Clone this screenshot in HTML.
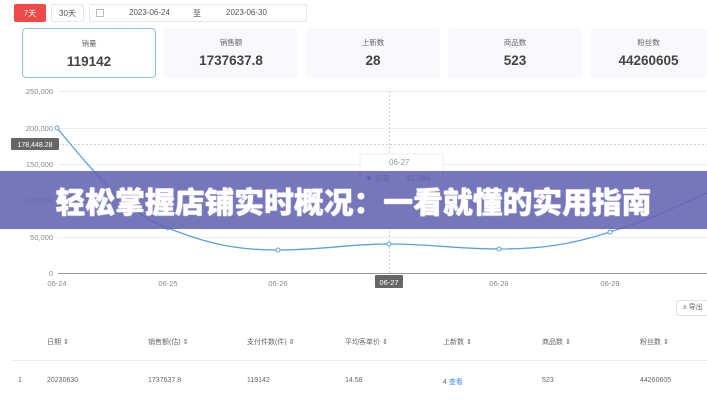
<!DOCTYPE html>
<html><head><meta charset="utf-8"><style>
*{margin:0;padding:0;box-sizing:border-box}
body{width:707px;height:400px;overflow:hidden;background:#fff;font-family:"Liberation Sans","Noto Sans CJK SC",sans-serif;position:relative;color:#333}
.abs{position:absolute}
.btn{position:absolute;top:4px;height:18px;font-size:8px;line-height:18px;text-align:center;border:1px solid #e6e6e6;border-radius:2px;color:#555}
.card{position:absolute;top:28px;width:134px;height:50px;background:#f7f9fc;border-radius:4px;text-align:center}
.card .t{font-size:7.5px;color:#666;margin-top:9px}
.card .v{font-size:13.5px;font-weight:bold;color:#444;margin-top:5px}
.yl{position:absolute;right:654px;font-size:7.5px;color:#888;text-align:right}
.xl{position:absolute;top:279px;font-size:7.5px;color:#888;transform:translateX(-50%)}
.th{position:absolute;top:337px;font-size:7px;color:#666}
.td{position:absolute;top:377px;font-size:7px;color:#666}
</style></head><body>
<div class="btn" style="left:14px;width:32px;background:#f04a4a;border-color:#f04a4a;color:#fff">7天</div>
<div class="btn" style="left:51px;width:33px">30天</div>
<div class="btn" style="left:89px;width:218px"></div>
<div class="abs" style="left:96px;top:9px;width:8px;height:8px;border:1px solid #bbb"></div>
<div class="abs" style="left:129px;top:8px;font-size:8px;color:#555">2023-06-24</div>
<div class="abs" style="left:193px;top:8px;font-size:8px;color:#555">至</div>
<div class="abs" style="left:226px;top:8px;font-size:8px;color:#555">2023-06-30</div>

<div class="card" style="left:22px;background:#fff;border:1.5px solid #8cc4e6"><div class="t">销量</div><div class="v">119142</div></div>
<div class="card" style="left:164px"><div class="t">销售额</div><div class="v">1737637.8</div></div>
<div class="card" style="left:306px"><div class="t">上新数</div><div class="v">28</div></div>
<div class="card" style="left:448px"><div class="t">商品数</div><div class="v">523</div></div>
<div class="card" style="left:590px;width:117px"><div class="t">粉丝数</div><div class="v">44260605</div></div>

<div class="yl" style="top:87px">250,000</div>
<div class="yl" style="top:124px">200,000</div>
<div class="yl" style="top:160px">150,000</div>
<div class="yl" style="top:196px">100,000</div>
<div class="yl" style="top:233px">50,000</div>
<div class="yl" style="top:269px">0</div>
<svg class="abs" style="left:0;top:0" width="707" height="300">
<g stroke="#eee" stroke-width="1">
<line x1="58" y1="91.5" x2="707" y2="91.5"/><line x1="58" y1="128.5" x2="707" y2="128.5"/><line x1="58" y1="164.5" x2="707" y2="164.5"/><line x1="58" y1="200.5" x2="707" y2="200.5"/><line x1="58" y1="237.5" x2="707" y2="237.5"/></g>
<line x1="58" y1="273.5" x2="707" y2="273.5" stroke="#999"/>
<line x1="58" y1="144.5" x2="707" y2="144.5" stroke="#ccc" stroke-dasharray="2,2"/>
<line x1="389.5" y1="91" x2="389.5" y2="273" stroke="#ccc" stroke-dasharray="2,2"/>
<path d="M57 128 C100 180,130 215,168 228 C210 245,240 250,278 250 C320 250,350 244,389 244 C430 244,460 249,499 249 C540 249,570 245,610 232 C650 220,680 205,707 193" fill="none" stroke="#5aa3d8" stroke-width="1.3"/>
<g fill="#fff" stroke="#5aa3d8" stroke-width="1"><circle cx="57" cy="128" r="2"/><circle cx="168" cy="228" r="2"/><circle cx="278" cy="250" r="2"/><circle cx="389" cy="244" r="2"/><circle cx="499" cy="249" r="2"/><circle cx="610" cy="232" r="2"/></g>
<rect x="360" y="154" width="83" height="32" fill="#fff" stroke="#eee" rx="2"/>
<text x="389" y="165" font-size="8" fill="#999" font-family="Liberation Sans">06-27</text>
<circle cx="369" cy="178" r="2" fill="#3a6fc4"/>
<text x="375" y="181" font-size="7.5" fill="#777" font-family="Liberation Sans,Noto Sans CJK SC">销量</text>
<text x="406" y="181" font-size="8" fill="#555" font-family="Liberation Sans">41,084</text>
<rect x="11" y="138" width="48" height="12" fill="#666" rx="1"/>
<text x="35" y="147" font-size="7" fill="#fff" text-anchor="middle" font-family="Liberation Sans">178,448.28</text>
<rect x="375" y="275" width="28" height="13" fill="#666" rx="1"/>
<text x="389" y="285" font-size="7.5" fill="#fff" text-anchor="middle" font-family="Liberation Sans">06-27</text>
</svg>
<div class="xl" style="left:57px">06-24</div>
<div class="xl" style="left:168px">06-25</div>
<div class="xl" style="left:278px">06-26</div>
<div class="xl" style="left:499px">06-28</div>
<div class="xl" style="left:610px">06-29</div>

<div class="abs" style="left:676px;top:300px;width:40px;height:16px;border:1px solid #e3e3e3;border-radius:2px;font-size:7px;color:#666;line-height:14px;padding-left:6px">± 导出</div>
<div class="th" style="left:47px">日期 ⇕</div>
<div class="th" style="left:148px">销售额(估) ⇕</div>
<div class="th" style="left:247px">支付件数(件) ⇕</div>
<div class="th" style="left:345px">平均客单价 ⇕</div>
<div class="th" style="left:443px">上新数 ⇕</div>
<div class="th" style="left:542px">商品数 ⇕</div>
<div class="th" style="left:640px">粉丝数 ⇕</div>
<div class="abs" style="left:10px;top:360px;width:697px;height:1px;background:#eee"></div>
<div class="td" style="left:18px">1</div>
<div class="td" style="left:47px">20230630</div>
<div class="td" style="left:148px">1737637.8</div>
<div class="td" style="left:247px">119142</div>
<div class="td" style="left:345px">14.58</div>
<div class="td" style="left:443px">4 <span style="color:#3a8ee6">查看</span></div>
<div class="td" style="left:542px">523</div>
<div class="td" style="left:640px">44260605</div>

<div class="abs" style="left:0;top:171px;width:707px;height:58px;background:rgba(98,98,178,0.87)"></div>
<div class="abs" style="left:0;top:171px;width:707px;height:58px;line-height:58px;text-align:center;color:#fff;font-weight:900;font-size:29.8px;font-family:'Noto Sans CJK SC',sans-serif;text-shadow:0 0 1px #fff,0 0 1px #fff">轻松掌握店铺实时概况：一看就懂的实用指南</div>
</body></html>
